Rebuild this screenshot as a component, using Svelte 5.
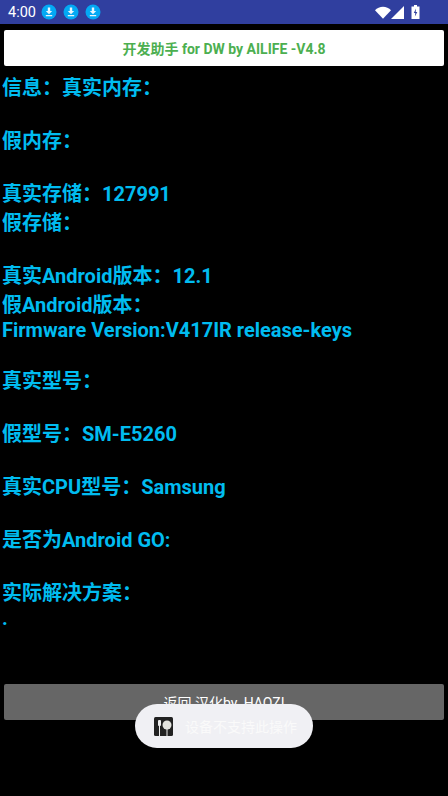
<script>
  const rows = [
    { t: '信息：真实内存：', k: 'cjk' },
    { t: '', k: 'gap' },
    { t: '假内存：', k: 'cjk' },
    { t: '', k: 'gap' },
    { t: '真实存储：127991', k: 'cjk' },
    { t: '假存储：', k: 'cjk' },
    { t: '', k: 'gap' },
    { t: '真实Android版本：12.1', k: 'cjk' },
    { t: '假Android版本：', k: 'cjk' },
    { t: 'Firmware Version:V417IR release-keys', k: 'lat' },
    { t: '', k: 'gap' },
    { t: '真实型号：', k: 'cjk' },
    { t: '', k: 'gap' },
    { t: '假型号：SM-E5260', k: 'cjk' },
    { t: '', k: 'gap' },
    { t: '真实CPU型号：Samsung', k: 'cjk' },
    { t: '', k: 'gap' },
    { t: '是否为Android GO:', k: 'cjk' },
    { t: '', k: 'gap' },
    { t: '实际解决方案：', k: 'cjk' },
    { t: '.', k: 'lat' }
  ];
</script>

<div class="page">
  <header class="status">
    <div class="left">
      <span class="time">4:00</span>
      {#each [0, 1, 2] as i (i)}
        <span class="dl">
          <svg viewBox="0 0 16 16" width="16" height="16">
            <circle cx="8" cy="8" r="7.500" fill="#03a9f4" />
            <path d="M6.800 3.500h2.400v3.600h2L8 10.200 4.800 7.100h2zM4.800 11h6.400v1.300H4.800z" fill="#e8f6fd" />
          </svg>
        </span>
      {/each}
    </div>
    <div class="right">
      <svg viewBox="0 0 16 13" width="16" height="13"><path d="M0 4.200C2 2 5 .8 8 .8s6 1.200 8 3.400L8 12.800z" fill="#fff" /></svg>
      <svg viewBox="0 0 13 13" width="13" height="13"><path d="M13 0v13H0z" fill="#fff" /></svg>
      <svg class="batt" viewBox="0 0 9 14" width="9" height="14">
        <path d="M3 0h3v1.500h2.500V14H.5V1.500H3z" fill="#fff" />
        <path d="M5 3.500 2.800 8h1.500l-.4 3.500L6.300 7H4.700z" fill="#303f9f" />
      </svg>
    </div>
  </header>

  <button class="top">开发助手 for DW by AILIFE -V4.8</button>

  <main class="info">
    {#each rows as r, i (i)}
      <div class={r.k}>{r.t}</div>
    {/each}
  </main>

  <button class="back">返回 汉化by_HAOZI</button>

  <div class="toast">
    <svg class="ic" viewBox="0 0 19 19" width="19" height="19">
      <rect width="19" height="19" rx="1.500" fill="#222" />
      <rect x="4" y="3" width="3" height="6" rx="1" fill="#eee" />
      <path d="M5.500 9v10" stroke="#eee" stroke-width="1" />
      <circle cx="13" cy="8" r="4.500" fill="#e4e4df" />
      <path d="M13 12v7" stroke="#eee" stroke-width="1" />
    </svg>
    <span>设备不支持此操作</span>
  </div>
</div>

<style>
  :global(body) {
    margin: 0;
    background: #000;
  }
  .page {
    position: relative;
    width: 448px;
    height: 796px;
    overflow: hidden;
    background: #000;
    font-family: Roboto, "Noto Sans CJK SC", sans-serif;
  }
  .status {
    height: 24px;
    background: #303f9f;
    display: flex;
    align-items: center;
    justify-content: space-between;
    padding: 0 28px 0 8px;
    box-sizing: border-box;
  }
  .left {
    display: flex;
    align-items: center;
  }
  .time {
    color: #fff;
    font-size: 14.500px;
    width: 33px;
  }
  .dl {
    display: flex;
    width: 22px;
  }
  .right {
    display: flex;
    align-items: center;
  }
  .batt {
    margin-left: 7px;
  }
  button {
    display: block;
    width: 440px;
    height: 36px;
    margin: 0 4px;
    border: 0;
    border-radius: 2px;
    padding: 0;
    font-family: inherit;
    font-size: 14px;
  }
  .top {
    margin-top: 6px;
    background: #fff;
    color: #4caf50;
    font-weight: 700;
  }
  .info {
    height: 546px;
    padding: 8px 0 0 2px;
    box-sizing: border-box;
    color: #00bcf0;
    font-size: 20px;
    font-weight: 700;
    margin-bottom: 72px;
  }
  .cjk {
    height: 29px;
    line-height: 29px;
    white-space: nowrap;
  }
  .lat {
    height: 23px;
    line-height: 20px;
    white-space: nowrap;
  }
  .gap {
    height: 24px;
  }
  .back {
    background: #666;
    color: #fff;
  }
  .toast {
    position: absolute;
    left: 135px;
    top: 704px;
    width: 178px;
    height: 44px;
    border-radius: 22px;
    background: #f0f0f4;
    display: flex;
    align-items: center;
    padding-left: 19px;
    box-sizing: border-box;
    color: #fafafa;
    font-size: 14px;
  }
  .ic {
    margin-right: 12px;
    flex: none;
  }
</style>
